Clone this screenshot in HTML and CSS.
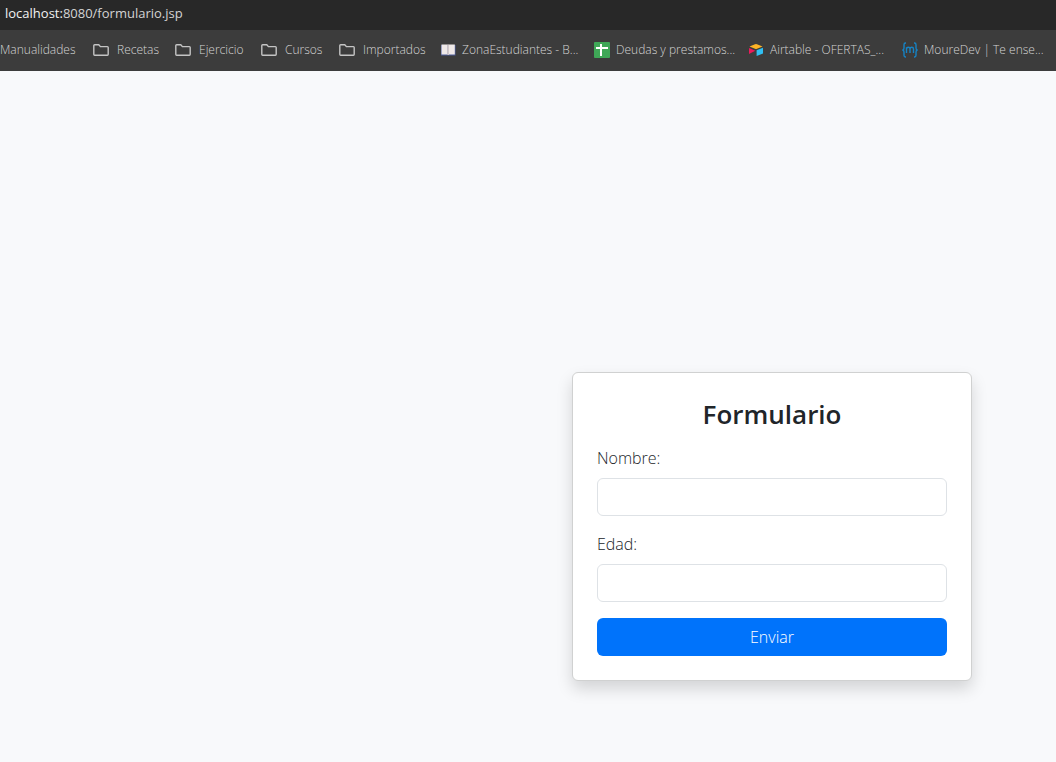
FILE: index.html
```html
<!DOCTYPE html>
<html lang="es">
<head>
<meta charset="utf-8">
<meta name="viewport" content="width=device-width, initial-scale=1">
<title>Formulario</title>
<link rel="stylesheet" href="styles.css">
</head>
<body>
<svg class="symbols" aria-hidden="true">
  <symbol id="folder" viewBox="0 0 16 16">
    <path d="M.8 12.2V3.5Q.8 2.7 1.6 2.7H5.8L7.4 4.6H14.4Q15.2 4.6 15.2 5.4V12.2Q15.2 13.2 14.4 13.2H1.6Q.8 13.2 .8 12.2Z" fill="none" stroke="#c4c4c4" stroke-width="1.4" stroke-linejoin="round"/>
  </symbol>
</svg>
<header class="browser">
  <div class="address"><span class="host">localhost:</span>8080/formulario.jsp</div>
  <nav class="bookmarks" aria-label="Marcadores">
    <a class="bookmark" href="#">Manualidades</a>
    <a class="bookmark folder" href="#"><svg class="icon"><use href="#folder"/></svg>Recetas</a>
    <a class="bookmark folder" href="#"><svg class="icon"><use href="#folder"/></svg>Ejercicio</a>
    <a class="bookmark folder" href="#"><svg class="icon"><use href="#folder"/></svg>Cursos</a>
    <a class="bookmark folder" href="#"><svg class="icon"><use href="#folder"/></svg>Importados</a>
    <a class="bookmark" href="#"><svg class="icon" viewBox="0 0 16 16"><path d="M1 3H15.5V13.5H1Z" fill="#4c5d9c"/><path d="M1.5 2.5H7.6V12.5H1.5Z" fill="#efe9e8"/><path d="M8.6 2.5H14.8V12.5H8.6Z" fill="#efe9e8"/><path d="M7.3 2.5H9V13H7.3Z" fill="#d2c8c9"/></svg>ZonaEstudiantes - B...</a>
    <a class="bookmark" href="#"><svg class="icon" viewBox="0 0 16 16"><rect width="16" height="16" rx="1" fill="#3fa757"/><path d="M2 6H14M7 2V14" stroke="#fff" stroke-width="2"/></svg>Deudas y prestamos...</a>
    <a class="bookmark" href="#"><svg class="icon" viewBox="0 0 16 16"><path d="M1.5 4.6 7 2.2Q8 1.8 9 2.2L14.5 4.6 9 6.8Q8 7.2 7 6.8Z" fill="#fcb326"/><path d="M8.6 8.3 15 5.8V11.6L8.6 14Z" fill="#30bff2"/><path d="M1 5.9 7.3 8.7 1 12Z" fill="#ec1a5b"/></svg>Airtable - OFERTAS_...</a>
    <a class="bookmark" href="#"><svg class="icon" viewBox="0 0 16 16" fill="none" stroke="#1683c4" stroke-width="1.4"><path d="M4 1H3.5Q2 1 2 2.7V6Q2 7.8.4 8Q2 8.2 2 10V13.3Q2 15 3.5 15H4M12 1H12.5Q14 1 14 2.7V6Q14 7.8 15.6 8Q14 8.2 14 10V13.3Q14 15 12.5 15H12M4.5 11V5.2M4.5 7Q4.8 5.3 6.3 5.3Q8 5.3 8 7V11M8 7Q8.3 5.3 9.8 5.3Q11.5 5.3 11.5 7V11"/></svg>MoureDev | Te ense...</a>
  </nav>
</header>
<main class="page">
  <form class="card">
    <h1 class="title">Formulario</h1>
    <div class="field">
      <label class="label" for="nombre">Nombre:</label>
      <input class="input" id="nombre" name="nombre" type="text">
    </div>
    <div class="field">
      <label class="label" for="edad">Edad:</label>
      <input class="input" id="edad" name="edad" type="text">
    </div>
    <button class="submit" type="submit">Enviar</button>
  </form>
</main>
</body>
</html>
```

FILE: styles.css
```css
* {
  box-sizing: border-box;
}

body {
  margin: 0;
  min-height: 100vh;
  display: flex;
  flex-direction: column;
  background: #f8f9fb;
  color: #212529;
  font-family: "Open Sans", "Noto Sans", sans-serif;
  font-size: 16px;
  font-weight: 300;
  line-height: 24px;
}

.symbols {
  display: none;
}

.browser {
  color: #d4d4d4;
  overflow: hidden;
}

.address {
  padding: 1px 5px 5px;
  background: #282828;
  font-size: 13px;
  font-weight: 400;
}

.host {
  color: #f2f2f2;
}

.bookmarks {
  display: grid;
  grid-template-columns: 75px 64px 68px 60px 83px repeat(4, 136px);
  column-gap: 18px;
  align-items: center;
  padding: 8px 0 9px;
  background: #3c3c3c;
  font-size: 12px;
}

.bookmark {
  display: flex;
  align-items: center;
  gap: 6px;
  color: inherit;
  text-decoration: none;
  white-space: nowrap;
}

.folder {
  gap: 8px;
}

.icon {
  flex: none;
  width: 16px;
  height: 16px;
}

.page {
  flex: 1;
  display: flex;
  justify-content: flex-end;
  align-items: flex-end;
  padding: 24px 84px 81px;
}

.card {
  width: 100%;
  max-width: 400px;
  padding: 24px;
  background: #fff;
  border: 1px solid #d0d1d1;
  border-radius: 6px;
  box-shadow: 0 8px 16px rgba(0, 0, 0, 0.15);
}

.title {
  margin: 0 0 15px;
  font-size: 26px;
  font-weight: 600;
  line-height: 34px;
  text-align: center;
}

.field {
  margin-bottom: 16px;
}

.label {
  display: block;
  margin-bottom: 8px;
}

.input {
  display: block;
  width: 100%;
  height: 38px;
  padding: 6px 12px;
  border: 1px solid #dee2e6;
  border-radius: 6px;
  background: #fff;
  color: inherit;
  font: inherit;
}

.submit {
  display: block;
  width: 100%;
  height: 38px;
  padding: 6px 12px;
  border: 0;
  border-radius: 6px;
  background: #0073fb;
  color: #fff;
  font: inherit;
}
```
